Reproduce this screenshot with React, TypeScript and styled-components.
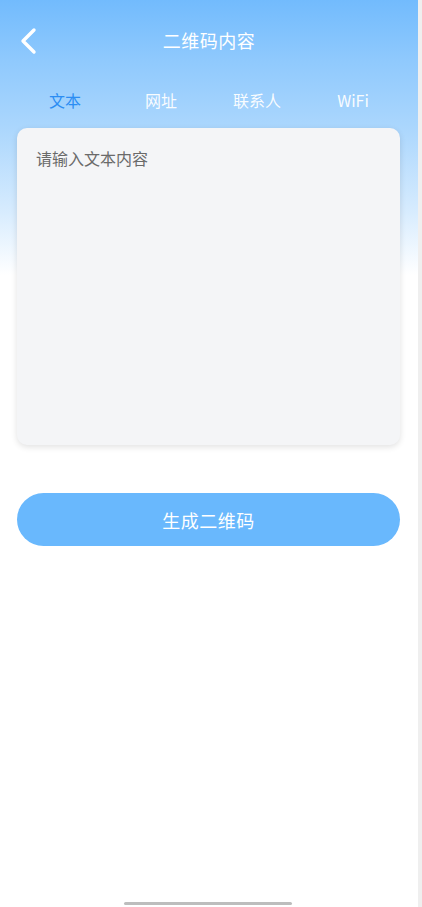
import React, { useState } from "react";
import styled, { createGlobalStyle } from "styled-components";

const GlobalStyle = createGlobalStyle`
  html, body {
    margin: 0;
    padding: 0;
    background: #efefef;
  }
  body {
    font-family: "Noto Sans CJK SC", "Noto Sans", Roboto, sans-serif;
  }
`;

const Screen = styled.div`
  width: 418px;
  height: 907px;
  display: flex;
  flex-direction: column;
  background: linear-gradient(
    180deg,
    #72bbfd 0px,
    #8fc9fd 60px,
    #acd7fd 130px,
    #d6ebfe 210px,
    #ffffff 275px,
    #ffffff 100%
  );
  position: relative;
  overflow: hidden;
`;

const NavBar = styled.div`
  height: 44px;
  margin-top: 19px;
  display: flex;
  align-items: center;
  justify-content: center;
  position: relative;
`;

const BackButton = styled.button`
  position: absolute;
  left: 14px;
  top: 6px;
  width: 30px;
  height: 32px;
  border: none;
  background: none;
  padding: 0;
  display: flex;
  align-items: center;
  justify-content: center;
`;

const Title = styled.div`
  color: #ffffff;
  font-size: 18px;
  letter-spacing: 0.5px;
  margin-top: -3px;
`;

const Tabs = styled.div`
  display: grid;
  grid-template-columns: repeat(4, 1fr);
  padding: 0 17px;
  margin-top: 17px;
  height: 40px;
  align-items: center;
`;

const Tab = styled.div<{ $active?: boolean }>`
  text-align: center;
  font-size: 16px;
  color: ${(p) => (p.$active ? "#2b8df3" : "rgba(255,255,255,0.95)")};
`;

const Card = styled.div`
  margin: 8px 18px 0 17px;
  height: 317px;
  background: #f4f5f7;
  border-radius: 10px;
  box-shadow: 0 2px 6px rgba(0, 0, 0, 0.12);
  box-sizing: border-box;
  padding: 18px 19px;
`;

const TextInput = styled.textarea`
  width: 100%;
  height: 100%;
  border: none;
  outline: none;
  resize: none;
  background: transparent;
  font-family: inherit;
  font-size: 16px;
  color: #333;
  padding: 0;
  line-height: 24px;
  &::placeholder {
    color: #6a6a6a;
  }
`;

const GenerateButton = styled.button`
  margin: 48px 18px 0 17px;
  height: 53px;
  border: none;
  border-radius: 27px;
  background: #69b8fd;
  color: #ffffff;
  font-family: inherit;
  font-size: 18px;
  letter-spacing: 0.5px;
`;

const HomeIndicator = styled.div`
  position: absolute;
  bottom: 2px;
  left: 124px;
  width: 168px;
  height: 3px;
  border-radius: 2px;
  background: #bdbdbd;
`;

const tabs = ["文本", "网址", "联系人", "WiFi"];

export default function App() {
  const [active, setActive] = useState(0);
  return (
    <>
      <GlobalStyle />
      <Screen>
        <NavBar>
          <BackButton aria-label="back">
            <svg width="20" height="28" viewBox="0 0 20 28">
              <path
                d="M15 3 L4 14 L15 25"
                fill="none"
                stroke="#ffffff"
                strokeWidth="3.4"
                strokeLinecap="round"
                strokeLinejoin="round"
              />
            </svg>
          </BackButton>
          <Title>二维码内容</Title>
        </NavBar>
        <Tabs>
          {tabs.map((t, i) => (
            <Tab key={t} $active={i === active} onClick={() => setActive(i)}>
              {t}
            </Tab>
          ))}
        </Tabs>
        <Card>
          <TextInput placeholder="请输入文本内容" />
        </Card>
        <GenerateButton>生成二维码</GenerateButton>
        <HomeIndicator />
      </Screen>
    </>
  );
}
